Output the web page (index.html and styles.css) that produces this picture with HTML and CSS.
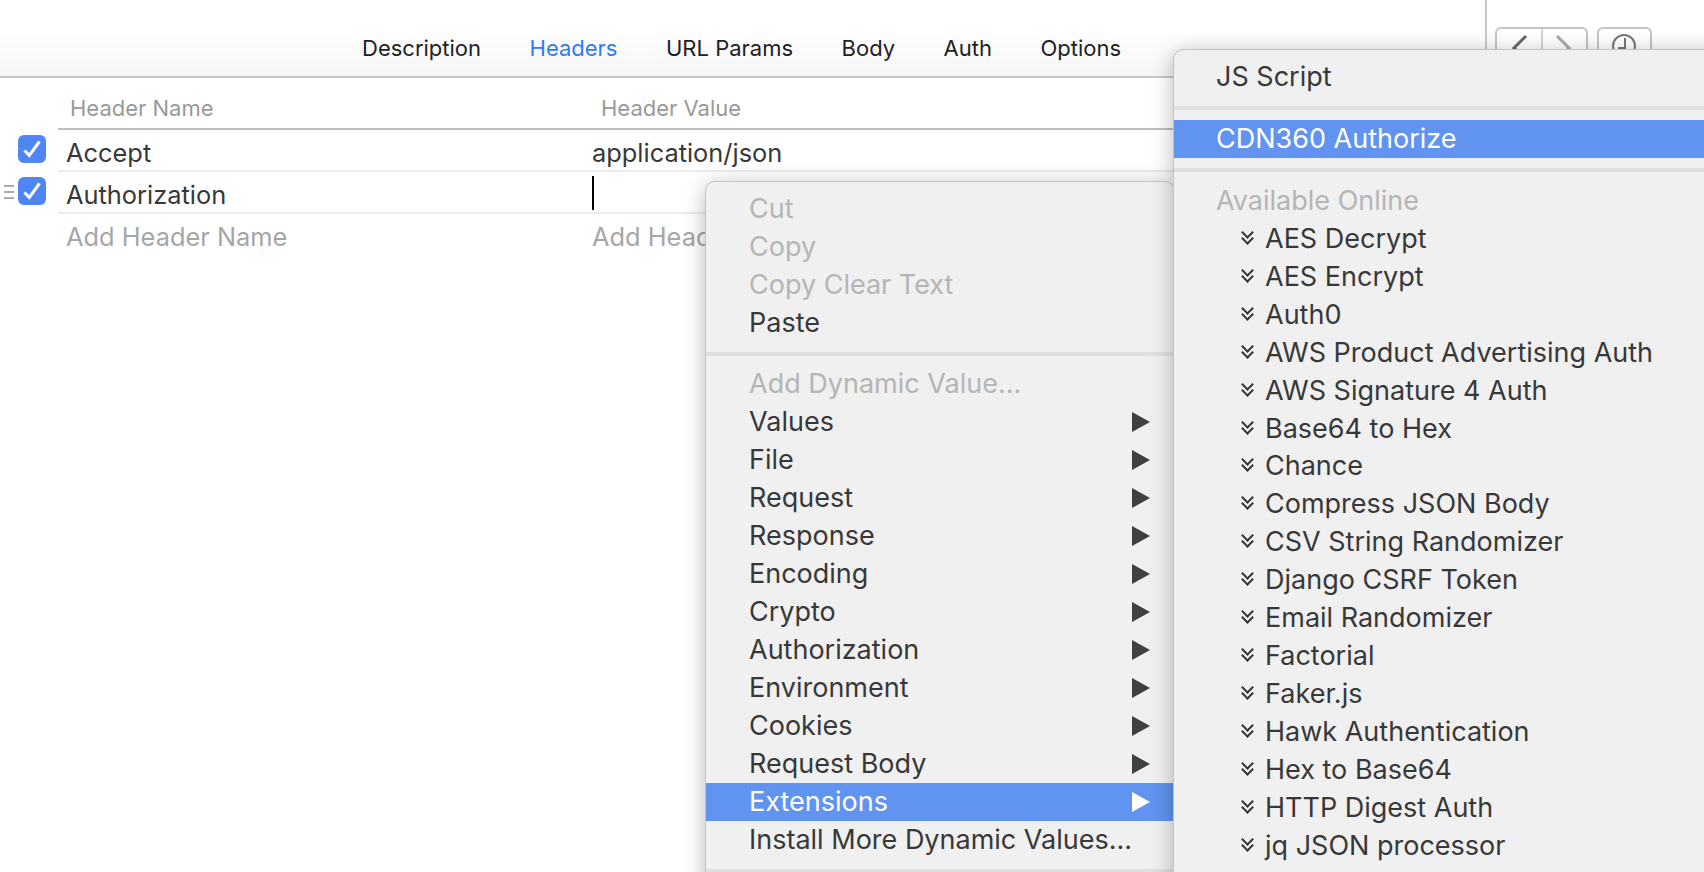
FILE: index.html
```html
<!DOCTYPE html>
<html lang="en">
<head>
  <meta charset="UTF-8">
  <title>Headers</title>
  <link rel="stylesheet" href="styles.css">
</head>
<body>
  <div class="topbar">
    <div class="tabs">
      <span class="tab">Description</span>
      <span class="tab active">Headers</span>
      <span class="tab">URL Params</span>
      <span class="tab">Body</span>
      <span class="tab">Auth</span>
      <span class="tab">Options</span>
    </div>
    <div class="tools">
      <div class="btn-group">
        <span class="tool-btn">
          <svg width="44" height="40" viewBox="0 0 44 40"><path d="M29 7 L17 19 L29 31" class="stroke-dark"/></svg>
        </span>
        <span class="tool-btn">
          <svg width="43" height="40" viewBox="0 0 43 40"><path d="M14 7 L26 19 L14 31" class="stroke-light"/></svg>
        </span>
      </div>
      <div class="btn-group">
        <span class="tool-btn">
          <svg width="51" height="40" viewBox="0 0 51 40"><circle cx="25" cy="17" r="11" class="stroke-thin"/><path d="M26 9 V19 H19" class="stroke-thin"/></svg>
        </span>
      </div>
    </div>
  </div>

  <div class="table">
    <div class="head-row">
      <span class="col-name">Header Name</span>
      <span class="col-value">Header Value</span>
    </div>
    <div class="row">
      <span class="check-cell">
        <span class="checkbox"><svg width="28" height="28" viewBox="0 0 28 28"><path d="M6.5 15.5 L11.3 20.5 L21.5 6.5"/></svg></span>
      </span>
      <span class="cell-name">Accept</span>
      <span class="cell-value">application/json</span>
    </div>
    <div class="row">
      <span class="check-cell">
        <span class="drag"><i></i><i></i><i></i></span>
        <span class="checkbox"><svg width="28" height="28" viewBox="0 0 28 28"><path d="M6.5 15.5 L11.3 20.5 L21.5 6.5"/></svg></span>
      </span>
      <span class="cell-name">Authorization</span>
      <span class="cell-value"><span class="caret"></span></span>
    </div>
    <div class="row last">
      <span class="check-cell"></span>
      <span class="cell-name placeholder">Add Header Name</span>
      <span class="cell-value placeholder">Add Header Value</span>
    </div>
  </div>

  <div class="menu menu-main">
    <div class="item off">Cut</div>
    <div class="item off">Copy</div>
    <div class="item off">Copy Clear Text</div>
    <div class="item">Paste</div>
    <div class="sep"></div>
    <div class="item off">Add Dynamic Value...</div>
    <div class="item sub">Values</div>
    <div class="item sub">File</div>
    <div class="item sub">Request</div>
    <div class="item sub">Response</div>
    <div class="item sub">Encoding</div>
    <div class="item sub">Crypto</div>
    <div class="item sub">Authorization</div>
    <div class="item sub">Environment</div>
    <div class="item sub">Cookies</div>
    <div class="item sub">Request Body</div>
    <div class="item sub selected">Extensions</div>
    <div class="item">Install More Dynamic Values...</div>
    <div class="sep"></div>
  </div>

  <div class="menu menu-ext">
    <div class="item">JS Script</div>
    <div class="sep"></div>
    <div class="item selected">CDN360 Authorize</div>
    <div class="sep"></div>
    <div class="item off">Available Online</div>
    <div class="item online">AES Decrypt</div>
    <div class="item online">AES Encrypt</div>
    <div class="item online">Auth0</div>
    <div class="item online">AWS Product Advertising Auth</div>
    <div class="item online">AWS Signature 4 Auth</div>
    <div class="item online">Base64 to Hex</div>
    <div class="item online">Chance</div>
    <div class="item online">Compress JSON Body</div>
    <div class="item online">CSV String Randomizer</div>
    <div class="item online">Django CSRF Token</div>
    <div class="item online">Email Randomizer</div>
    <div class="item online">Factorial</div>
    <div class="item online">Faker.js</div>
    <div class="item online">Hawk Authentication</div>
    <div class="item online">Hex to Base64</div>
    <div class="item online">HTTP Digest Auth</div>
    <div class="item online">jq JSON processor</div>
  </div>
</body>
</html>
```

FILE: styles.css
```css
html, body {
  margin: 0;
  padding: 0;
  height: 100%;
  overflow: hidden;
}
body {
  font-family: Inter, "Noto Sans", sans-serif;
  background-color: #fff;
  color: #383838;
  position: relative;
}

/* top tabs */
.topbar {
  height: 76px;
  border-bottom: 2px solid #c8c8c8;
  background: linear-gradient(to bottom, #fff 30px, #f6f6f6 76px);
  display: flex;
  position: relative;
}
.tabs {
  display: flex;
  gap: 48.5px;
  padding: 36px 0 0 362px;
  font-size: 22px;
  line-height: 24px;
  color: #222;
}
.tab.active { color: #2f7bf5; }
.tools {
  position: absolute;
  left: 1485px;
  top: 0;
  height: 76px;
  border-left: 2px solid #c8c8c8;
  padding: 27px 0 0 8px;
  display: flex;
  gap: 9px;
  align-items: flex-start;
}
.btn-group {
  display: flex;
  border: 2px solid #c4c4c4;
  border-radius: 6px;
  height: 40px;
  background-color: #fff;
}
.tool-btn { display: block; height: 40px; }
.tool-btn + .tool-btn { border-left: 2px solid #d4d4d4; }
.tool-btn svg { display: block; }
.stroke-dark, .stroke-light, .stroke-thin { fill: none; stroke-width: 3; }
.stroke-dark { stroke: #666; }
.stroke-light { stroke: #aaa; }
.stroke-thin { stroke: #777; stroke-width: 2; }

/* header table */
.table { padding-left: 58px; }
.head-row {
  display: flex;
  height: 31px;
  padding-top: 18px;
  padding-bottom: 1px;
  border-bottom: 2px solid #bdbdbd;
  font-size: 22px;
  line-height: 24px;
  color: #999;
}
.col-name { width: 543px; padding-left: 12px; box-sizing: border-box; }
.row {
  display: flex;
  height: 37px;
  padding-top: 3px;
  border-bottom: 2px solid #ececec;
  font-size: 25.4px;
  line-height: 40px;
  position: relative;
}
.row.last { border-bottom: none; }
.cell-name { width: 534px; padding-left: 8px; box-sizing: border-box; }
.placeholder { color: #a6a6a6; }
.caret {
  display: block;
  width: 2px;
  height: 34px;
  margin-top: 1px;
  background-color: #000;
}
.check-cell {
  position: absolute;
  left: -58px;
  top: 0;
  width: 58px;
  height: 40px;
}
.checkbox {
  position: absolute;
  left: 18px;
  top: 5px;
  width: 28px;
  height: 28px;
  border-radius: 6px;
  background-color: #4f86f5;
}
.checkbox svg { display: block; }
.checkbox path { fill: none; stroke: #fff; stroke-width: 3; }
.drag {
  position: absolute;
  left: 4px;
  top: 13px;
  display: flex;
  flex-direction: column;
  gap: 4px;
}
.drag i {
  display: block;
  width: 10px;
  height: 2px;
  background-color: #aaa;
}

/* context menus */
.menu {
  position: absolute;
  box-sizing: border-box;
  background-color: #f0f0f0;
  border: 1px solid #c4c4c4;
  border-radius: 10px 10px 0 0;
  box-shadow: 0 4px 22px rgba(0, 0, 0, 0.28);
  font-size: 27px;
  color: #383838;
}
.menu-main {
  left: 705px;
  top: 181px;
  width: 470px;
  height: 720px;
  padding-top: 8px;
}
.menu-ext {
  left: 1173px;
  top: 49px;
  width: 560px;
  height: 860px;
  padding-top: 8px;
}
.item {
  height: 38px;
  line-height: 38px;
  padding-left: 43px;
  position: relative;
  white-space: nowrap;
}
.menu-ext .item { padding-left: 42px; height: 37.95px; }
.menu-ext .item.online { padding-left: 91px; }
.item.off { color: #b5b5b5; }
.item.selected { background-color: #6193f0; color: #fff; }
.sep {
  height: 4px;
  margin: 10px 0;
  background-color: #e0e0e0;
}
.menu-main .sep { margin-bottom: 9px; }
.item.sub::after {
  content: "";
  position: absolute;
  left: 426px;
  top: 9px;
  border-left: 18px solid #404040;
  border-top: 10px solid transparent;
  border-bottom: 10px solid transparent;
}
.item.sub.selected::after { border-left-color: #fff; }
.item.online::before,
.item.online::after {
  content: "";
  position: absolute;
  left: 69px;
  width: 9px;
  height: 9px;
  box-sizing: border-box;
  border-right: 2px solid #333;
  border-bottom: 2px solid #333;
  transform: rotate(45deg);
}
.item.online::before { top: 8px; }
.item.online::after { top: 14px; }
```
